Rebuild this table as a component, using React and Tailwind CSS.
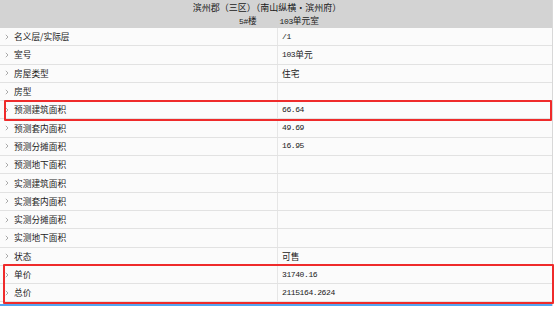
import React from "react";

const cjk = { fontFamily: '"Noto Sans CJK SC", "Noto Sans", sans-serif' };

// label / value pairs, value parts: [text, isNumber]
const rows = [
  { label: "名义层/实际层", value: [["/1", true]] },
  { label: "室号", value: [["103", true], ["单元", false]] },
  { label: "房屋类型", value: [["住宅", false]] },
  { label: "房型", value: [] },
  { label: "预测建筑面积", value: [["66.64", true]] },
  { label: "预测套内面积", value: [["49.69", true]] },
  { label: "预测分摊面积", value: [["16.95", true]] },
  { label: "预测地下面积", value: [] },
  { label: "实测建筑面积", value: [] },
  { label: "实测套内面积", value: [] },
  { label: "实测分摊面积", value: [] },
  { label: "实测地下面积", value: [] },
  { label: "状态", value: [["可售", false]] },
  { label: "单价", value: [["31740.16", true]] },
  { label: "总价", value: [["2115164.2624", true]] },
];

const Num = ({ children }) => (
  <span className="font-['Liberation_Mono',monospace] text-[8px] tracking-[-0.4px]">{children}</span>
);

const Chevron = () => (
  <svg width="4" height="6" viewBox="0 0 4 6" className="shrink-0">
    <path d="M0.8 0.8 L3 3 L0.8 5.2" fill="none" stroke="#a0a0a0" strokeWidth="0.9" />
  </svg>
);

const App = () => {
  return (
    <div className="w-[558px] h-[309px] bg-white overflow-hidden text-[#1a1a1a] text-[8.7px]" style={cjk}>
      <div className="w-[553px] border-r border-[#d8d8d8]">
        {/* Header */}
        <div className="h-[28px] bg-[#d3d3d3] flex flex-col items-center pt-[1px] leading-[13px]">
          <div className="mr-[18px] text-[9px]">滨州郡（三区）（南山纵横·滨州府）</div>
          <div className="flex gap-[23px] ml-[6px]">
            <span><Num>5#</Num>楼</span>
            <span><Num>103</Num>单元室</span>
          </div>
        </div>

        {/* Rows */}
        <div className="relative">
          {rows.map((r) => (
            <div key={r.label} className="h-[18.3px] flex bg-[#fbfbfb] border-b border-[#e2e2e2] box-border">
              <div className="w-[278px] flex items-center gap-[5px] pl-[5px] border-r border-[#e6e6e6]">
                <Chevron />
                <span>{r.label}</span>
              </div>
              <div className="flex-1 flex items-center pl-[4px]">
                {r.value.map(([t, isNum], i) =>
                  isNum ? <Num key={i}>{t}</Num> : <span key={i}>{t}</span>
                )}
              </div>
            </div>
          ))}

          {/* annotation boxes */}
          <div className="absolute left-[4px] w-[548px] top-[72px] h-[21px] border-2 border-[#ef2b2b] rounded-[1px]" />
          <div className="absolute left-[3px] w-[551px] top-[236px] h-[40px] border-2 border-[#ef2b2b] rounded-[1px]" />
        </div>

        <div className="h-[2px]" />
        <div className="h-[2px] bg-[#52a6f2]" />
      </div>
    </div>
  );
};

export default App;
